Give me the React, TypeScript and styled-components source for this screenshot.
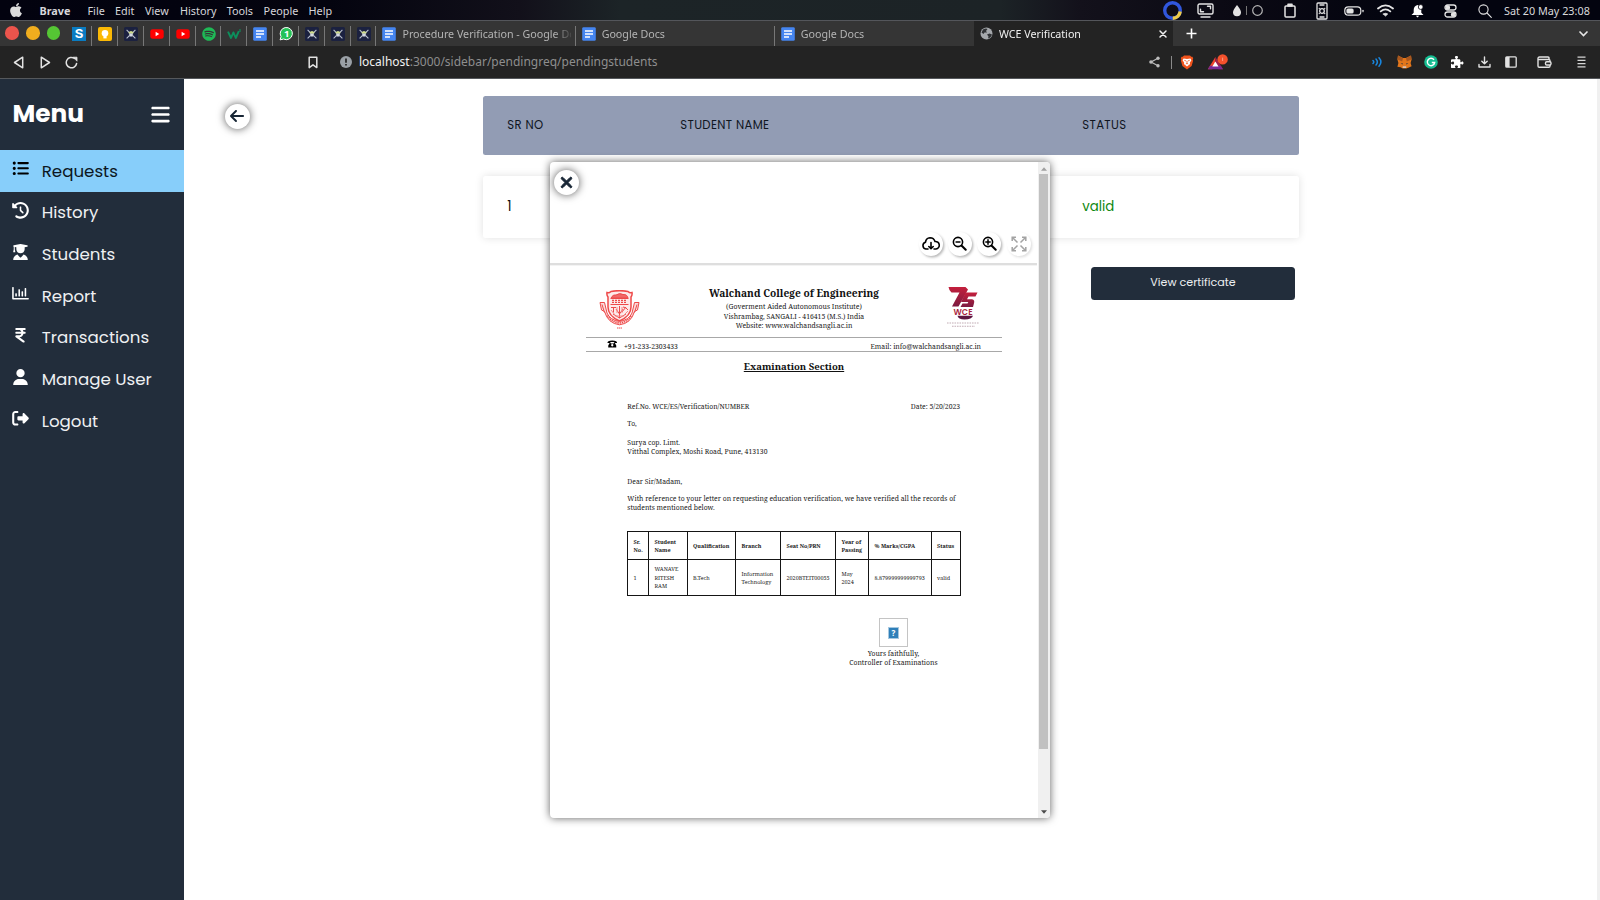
import React from 'react';
import styled, { createGlobalStyle } from 'styled-components';
import {
  FaApple, FaSpotify, FaListUl, FaClockRotateLeft, FaUserGraduate, FaIndianRupeeSign, FaUser,
  FaRightFromBracket, FaArrowLeft, FaXmark, FaBars, FaPuzzlePiece,
} from 'react-icons/fa6';
import { FaRegChartBar } from 'react-icons/fa';

const ui = '"Noto Sans", "Open Sans", sans-serif';
const poppins = 'Poppins, Inter, "Noto Sans", sans-serif';
const serif = '"Noto Serif", "DejaVu Serif Condensed", serif';
const navy = '#222d3b';

const Global = createGlobalStyle`
  * { box-sizing: border-box; }
  html, body { margin: 0; padding: 0; }
  body { width: 1600px; height: 900px; overflow: hidden; background: #fff; }
  svg { display: block; flex: none; }
`;

const Screen = styled.div`
  position: relative;
  display: flex;
  flex-direction: column;
  width: 1600px;
  height: 900px;
  overflow: hidden;
`;

/* ---------- desktop menu bar ---------- */
const MenuBar = styled.header`
  display: flex;
  align-items: center;
  justify-content: space-between;
  height: 20px;
  padding: 1.5px 9px 0 8px;
  background: linear-gradient(90deg, #02020f 0, #04040f 330px, #12101a 520px, #1c2427 620px, #1c2326 1000px, #13111b 1080px, #0a0913 1240px, #03040f 1400px);
  color: #d6d6da;
  font: 10.83px/18px ${ui};
`;
const MenuGroup = styled.nav`
  display: flex;
  align-items: center;
  white-space: nowrap;
`;
const MenuName = styled.span<{ $w: number; $bold?: boolean }>`
  width: ${p => p.$w}px;
  font-weight: ${p => (p.$bold ? 700 : 400)};
`;
const AppleSlot = styled.span`
  width: 31.5px;
  color: #dcdcdc;
  margin-top: -1px;
`;
const StatusGroup = styled.div`
  display: flex;
  align-items: center;
  color: #e4e4e4;
  height: 18px;
`;
const StatusIcon = styled.span<{ $w: number }>`
  display: flex;
  justify-content: center;
  width: ${p => p.$w}px;
`;
const Clock = styled.time`
  width: 87px;
  white-space: nowrap;
  color: #d9d9dc;
`;

/* ---------- browser chrome ---------- */
const TabStrip = styled.div`
  display: flex;
  height: 26px;
  border-top: 1px solid #54565b;
  background: #353535;
  font: 10.7px/16px ${ui};
`;
const Lights = styled.div`
  display: flex;
  align-items: center;
  gap: 7.2px;
  width: 66.5px;
  padding: 0 0 0.5px 5px;
`;
const Light = styled.i<{ $c: string }>`
  width: 13.7px;
  height: 13.7px;
  border-radius: 50%;
  background: ${p => p.$c};
`;
const PinnedTab = styled.div`
  display: flex;
  justify-content: center;
  align-items: center;
  width: 25.84px;
  background: linear-gradient(#777, #777) right bottom / 1px 20px no-repeat;
`;
const Tab = styled.div<{ $active?: boolean; $line?: boolean }>`
  display: flex;
  align-items: center;
  width: 199.2px;
  padding: 0 5px 0 6px;
  color: ${p => (p.$active ? '#f1f1f1' : '#b4b4b4')};
  background: ${p => (p.$active ? '#232323' : p.$line ? 'linear-gradient(#777, #777) right bottom / 1px 20px no-repeat' : 'none')};
`;
const TabTitle = styled.span`
  flex: 1;
  margin-left: 6px;
  overflow: hidden;
  white-space: nowrap;
  mask-image: linear-gradient(90deg, #000 152px, transparent 172px);
`;
const NewTab = styled.div`
  display: flex;
  align-items: center;
  flex: 1;
  justify-content: space-between;
  padding: 0 11px 0 13px;
`;
const Toolbar = styled.div`
  display: flex;
  align-items: center;
  height: 33px;
  border-bottom: 1px solid #55585c;
  background: #232323;
  color: #e2e2e2;
`;
const ToolSlot = styled.span<{ $w: number; $gap?: number }>`
  display: flex;
  justify-content: center;
  width: ${p => p.$w}px;
  margin-left: ${p => p.$gap || 0}px;
`;
const Url = styled.span`
  width: 782.5px;
  margin-left: 6.5px;
  color: #8e8e8e;
  font: 12px/18px ${ui};
  b { font-weight: 400; color: #f2f2f2; }
`;

/* ---------- page ---------- */
const Page = styled.div`
  display: flex;
  height: 821px;
  background: #fff;
`;
const Sidebar = styled.aside`
  width: 184px;
  background: ${navy};
  color: #f1f3f5;
  font-family: ${poppins};
`;
const SideHead = styled.div`
  display: flex;
  align-items: center;
  justify-content: space-between;
  height: 71.2px;
  padding: 0 12.7px 1px 12.5px;
  color: #fff;
  font-size: 24.8px;
  font-weight: 700;
  line-height: 68px;
`;
const SideItem = styled.a<{ $active?: boolean }>`
  display: flex;
  align-items: center;
  height: 41.67px;
  padding: 0.6px 0 0 12px;
  font-size: 16.67px;
  line-height: 25px;
  color: ${p => (p.$active ? '#0c1722' : '#eef0f2')};
  background: ${p => (p.$active ? '#87cefa' : 'transparent')};
  svg { width: 17px; height: 16.67px; margin: -5.5px 12.7px 0 0; color: ${p => (p.$active ? '#000' : '#fff')}; }
`;
const Main = styled.main`
  display: flex;
  flex: 1;
  align-items: flex-start;
  padding: 17px 0 0 40.8px;
`;
const RoundButton = styled.button`
  display: flex;
  align-items: center;
  justify-content: center;
  width: 25.4px;
  height: 25.4px;
  padding: 0;
  border: 0;
  border-radius: 50%;
  background: #fff;
  color: #182635;
  box-shadow: 0 0 8px rgba(0, 0, 0, 0.65);
`;
const BackSlot = styled.div`
  width: 258px;
  padding-top: 7.8px;
`;
const Requests = styled.section`
  display: flex;
  flex-direction: column;
  width: 816.2px;
  font-family: ${poppins};
`;
const columns = '173px 402px 1fr';
const TableHead = styled.div`
  display: grid;
  grid-template-columns: ${columns};
  align-items: center;
  height: 58.8px;
  padding: 0.6px 25px 0 24.5px;
  border-radius: 2.5px;
  background: #929cb4;
  color: #10161f;
  font-size: 11.67px;
  letter-spacing: 0.35px;
`;
const TableRow = styled.div`
  display: grid;
  grid-template-columns: ${columns};
  align-items: center;
  height: 62px;
  margin-top: 21.2px;
  padding: 1px 25px 0 24.5px;
  border-radius: 2.5px;
  box-shadow: 0 0 8px rgba(0, 0, 0, 0.12);
  color: #111;
  font-size: 13.33px;
`;
const Valid = styled.span`
  grid-column: 3;
  color: #0f880f;
`;
const CertButton = styled.button`
  align-self: flex-end;
  width: 204px;
  height: 33px;
  margin: 28.8px 4px 0 0;
  padding: 0 0 1.2px;
  border: 0;
  border-radius: 3.5px;
  background: ${navy};
  color: #eceef0;
  font: 11.11px/17px ${poppins};
`;
const PageScroll = styled.div`
  width: 3.5px;
  background: #f0f0f0;
`;

/* ---------- certificate dialog ---------- */
const Dialog = styled.div`
  position: absolute;
  left: 550px;
  top: 162px;
  display: flex;
  width: 500px;
  height: 656px;
  border-radius: 4px;
  background: #fff;
  box-shadow: 0 0 9px rgba(0, 0, 0, 0.62);
`;
const DialogBody = styled.div`
  width: 487.5px;
`;
const DialogHead = styled.div`
  display: flex;
  flex-direction: column;
  justify-content: space-between;
  height: 101px;
  padding: 7.7px 7px 7.3px 3.9px;
`;
const Divider = styled.div`
  height: 3px;
  margin-right: 1px;
  background: #dedede;
  border-bottom: 1px solid #f3f3f3;
`;
const Tools = styled.div`
  display: flex;
  justify-content: flex-end;
  gap: 5.3px;
`;
const Tool = styled.span<{ $off?: boolean }>`
  display: flex;
  align-items: center;
  justify-content: center;
  width: 24px;
  height: 24px;
  border-radius: 50%;
  color: ${p => (p.$off ? '#a3a3a3' : '#000')};
  box-shadow: 1.4px 1.4px 2.5px rgba(0, 0, 0, ${p => (p.$off ? 0.12 : 0.28)});
`;
const ScrollTrack = styled.div`
  display: flex;
  flex-direction: column;
  align-items: center;
  justify-content: space-between;
  width: 12.5px;
  padding: 4.5px 1.5px 4.5px 1px;
  border-radius: 0 4px 4px 0;
  background: #f0f0f0;
`;
const ScrollThumb = styled.div`
  width: 9.4px;
  height: 575px;
  margin: 0 0 57px;
  background: #c1c1c1;
`;

/* ---------- certificate sheet ---------- */
const Sheet = styled.article`
  width: 416px;
  margin-left: 36px;
  color: #1a1a1a;
  font: 6.83px/9.15px ${serif};
`;
const Letterhead = styled.div`
  display: grid;
  grid-template-columns: 96px 1fr 96px;
  height: 71.5px;
  border-bottom: 1px solid #a8a8a8;
`;
const Emblem = styled.div<{ $pad: string }>`
  padding: ${p => p.$pad};
`;
const College = styled.div`
  display: flex;
  flex-direction: column;
  align-items: center;
  padding-top: 21.3px;
  white-space: nowrap;
`;
const CollegeName = styled.strong`
  margin-bottom: 1.3px;
  font-size: 10.2px;
  line-height: 13px;
  color: #111;
`;
const CollegeLine = styled.span<{ $size?: number; $gap?: number }>`
  font-size: ${p => p.$size || 6.83}px;
  margin-bottom: ${p => p.$gap || 0}px;
`;
const Contact = styled.div`
  display: flex;
  align-items: center;
  height: 14px;
  padding: 4.2px 21px 0 21px;
  border-bottom: 1px solid #a8a8a8;
  svg { margin: -3.5px 6.5px 0 0; }
`;
const Mail = styled.span`
  margin-left: auto;
`;
const SectionTitle = styled.h2`
  margin: 8.8px 0 29px;
  text-align: center;
  font-size: 9.56px;
  font-weight: 700;
  line-height: 13px;
  text-decoration: underline;
  text-decoration-thickness: 1px;
  text-underline-offset: 1px;
  color: #111;
`;
const Letter = styled.div`
  width: 332.8px;
  margin-left: 41.3px;
`;
const Reference = styled.div`
  display: flex;
  justify-content: space-between;
`;
const Para = styled.p<{ $top: number }>`
  margin: ${p => p.$top}px 0 0;
  white-space: pre-line;
`;
const Records = styled.table`
  width: 333px;
  margin: 19.4px 0 0 -0.3px;
  border-collapse: collapse;
  table-layout: fixed;
  font-size: 5.47px;
  line-height: 8.35px;
  th, td {
    padding: 0 0 0 5.5px;
    border: 1px solid #151515;
    text-align: left;
    white-space: pre;
  }
  tr { height: 36px; }
  tr:first-child { height: 28px; }
`;
const Signature = styled.div`
  display: flex;
  flex-direction: column;
  align-items: center;
  width: 88px;
  margin: 22px 22.7px 0 auto;
  white-space: nowrap;
`;
const MissingImage = styled.div`
  display: flex;
  align-items: center;
  justify-content: center;
  width: 28.4px;
  height: 28.5px;
  margin-bottom: 2.3px;
  border: 1px solid #c4c4c4;
`;

const stroke = { fill: 'none', stroke: 'currentColor', strokeLinecap: 'round', strokeLinejoin: 'round' } as const;

const Docs = () => (
  <svg width="14" height="14" viewBox="0 0 14 14">
    <rect x="0.2" y="0.2" width="13.6" height="13.6" rx="1.4" fill="#4585f0" />
    <path d="M3 4h8M3 7h8M3 10h5" stroke="#fff" strokeWidth="1.5" fill="none" />
  </svg>
);
const Drone = () => (
  <svg width="14" height="14" viewBox="0 0 14 14">
    <rect width="14" height="14" rx="1.6" fill="#1b2140" />
    <path d="M2.6 2.8 5.6 5.8M11.4 2.8 8.4 5.8M2.6 11.4 5.6 8.4M11.4 11.4 8.4 8.4" stroke="#b9c0cf" strokeWidth="1.1" />
    <path d="M4.4 5.6Q7 2.2 9.6 5.6L9 6.8H5z" fill="#cfdc8c" />
    <path d="M5 6.6h4l-.6 2.8H5.6z" fill="#d3d8e3" />
  </svg>
);
const YouTube = () => (
  <svg width="14" height="14" viewBox="0 0 14 14">
    <rect x="0.3" y="2.2" width="13.4" height="9.6" rx="2.4" fill="#f00" />
    <path d="M5.6 4.8v4.4L9.3 7z" fill="#fff" />
  </svg>
);
const SBlock = () => (
  <svg width="14" height="14" viewBox="0 0 14 14">
    <rect width="14" height="14" fill="#0a7cc2" />
    <text x="7" y="11.2" textAnchor="middle" fontFamily="Inter, sans-serif" fontWeight="700" fontSize="11.5" textLength="8.6" lengthAdjust="spacingAndGlyphs" fill="#fff">S</text>
  </svg>
);
const Keep = () => (
  <svg width="14" height="14" viewBox="0 0 14 14">
    <rect width="14" height="14" rx="2" fill="#fbb905" />
    <circle cx="7" cy="6.2" r="3.3" fill="#fff" />
    <path d="M5.4 8h3.200v3.400H5.400z" fill="#fff" />
  </svg>
);
const Zigzag = () => (
  <svg width="15" height="12" viewBox="0 0 15 12" fill="none" stroke="#0c8f5c" strokeWidth="1.9" strokeLinejoin="round">
    <path d="M1 3.6 4 10 6.4 4.4 8.8 10 11.8 3.2" />
    <path d="M13 1v3" strokeWidth="1.1" />
  </svg>
);
const Chat = () => (
  <svg width="15" height="15" viewBox="0 0 15 15">
    <path d="M1.1 13.9 2 10.6A6.1 6.1 0 1 1 4.5 13z" fill="#25c257" stroke="#fff" strokeWidth="1" />
    <text x="7.7" y="11" textAnchor="middle" fontFamily="Noto Sans, sans-serif" fontWeight="700" fontSize="9.500" fill="#fff">1</text>
  </svg>
);
const Brave = () => (
  <svg width="14" height="15" viewBox="0 0 14 15">
    <path d="M4 .6h6l1.2 1.2 1.2-.1.8 1.6-.5 1.2.4 1.2-1.5 5.400L7 14.600 2.400 11.100.9 5.700l.4-1.200L.8 3.300l.8-1.600 1.200.1z" fill="#f0531c" />
    <path d="M3.6 3.4 7 4l3.4-.6 1 1.8-1.6 2.6.3 1.2L7 11.6 3.9 9l.3-1.2L2.6 5.2z" fill="#fff" />
    <path d="M4.3 5.3 6.2 6M9.7 5.3 7.8 6M7 6v2.4M5.8 9 7 8.4 8.2 9" stroke="#f0531c" strokeWidth=".8" fill="none" />
  </svg>
);
const Rewards = () => (
  <svg width="22" height="17" viewBox="0 0 22 17">
    <path d="M8.4 3 .8 15.2h4.4L8.4 9.6z" fill="#f0452c" />
    <path d="M8.4 3v6.6l3 5.6H16z" fill="#a5204c" />
    <path d="M.8 15.2 3 11.8h10.8l2.2 3.4z" fill="#7a2a94" />
    <path d="M8.4 7.4 5.3 12.6h6.2z" fill="#fff" />
    <circle cx="15.6" cy="5.4" r="5.2" fill="#f4512c" />
    <path d="M15.6 3.6v3.4" stroke="#f9a18a" strokeWidth=".9" />
  </svg>
);
const Fox = () => (
  <svg width="15" height="14" viewBox="0 0 15 14">
    <path d="M1 .5 6 3h3l5-2.500.6 4-1 3.500 1 3.200-3.200 1.500L9.200 13.500H5.800L3.600 12.200.4 11.700 1.400 8 .4 4.500z" fill="#e2761b" />
    <path d="M1 .5 6 3 5.200 6.400.6 4.500zM14 .5 9 3l.8 3.400L14.400 4.500z" fill="#a8571f" />
    <path d="M3.600 8.600 5.800 8.200 5.600 9.600zM11.400 8.600 9.200 8.200l.2 1.400z" fill="#233447" />
    <path d="M5.800 11.200h3.400l.2 1.900H5.600z" fill="#d7c1b3" />
  </svg>
);

const Phone = () => (
  <svg width="10.5" height="8" viewBox="0 0 21 16">
    <path d="M1 6Q0 1 10.500 1T20 6h-5.500V4.200h-8V6z" fill="#000" />
    <path d="M5.500 5.500h2v1.500h6V5.500h2L18.500 11v4H2.500v-4z" fill="#000" />
    <circle cx="10.5" cy="10.5" r="2.3" fill="#fff" />
  </svg>
);

const Shield = () => (
  <svg width="41" height="39" viewBox="0 0 41 39">
    <g fill="none" stroke="#ee4a4a" strokeWidth="1">
      <path d="M8 2.500Q10 3.500 12 1.500 20.500-.2 29 1.500q2 2 4 1Q33.500 5 32 7v10q0 9-11.500 14Q9 26 9 17V7Q7.500 5 8 2.500z" fill="#fdeaea" strokeWidth="1.5" />
      <path d="M11.500 8.500h18M11.500 14.500h18" />
      <path d="M12 8q2-4 5-3 4-2.500 7-.5 4-.5 5 3.500z" fill="#ef6868" />
      <path d="M13 10.300h15M13 12.300h15" strokeDasharray="2 1" strokeWidth="1.3" />
      <path d="M12 17.500h5M14.500 17.500v5M24 17q3 0 5 3M23 22l4-5M20.500 16v12M17 19l3.500 5 3.500-5M14 24l6.500 4 6.500-4" />
      <path d="M12 20l4 5M29 21l-4 4M18 17v6M23 17v6M16 26h9" stroke="#f38a8a" />
      <path d="M1 12.500h4.500L8 23q3 7 12.500 8.500Q30 30 33 23l2.500-10.500H40L38.500 20l-3 1.500Q32 33.500 20.500 34.800 9 33.500 5.500 21.500l-3-1.500z" fill="#fbdcdc" />
      <path d="M3 14.500 5.500 22.500M38 14.500l-2.500 8" />
      <path d="M8.500 25.500q4 6.500 12 7.500 8-1 12-7.500" strokeDasharray="1.2 .9" strokeWidth="1.6" />
      <path d="M18 38h5" strokeDasharray="1.5 .5" />
    </g>
  </svg>
);

const Jubilee = () => (
  <svg width="34" height="43" viewBox="0 0 34 43">
    <defs>
      <linearGradient id="wine" x1="0" y1="0" x2="0" y2="1">
        <stop offset="0" stopColor="#c41f3c" />
        <stop offset="1" stopColor="#7c1a40" />
      </linearGradient>
    </defs>
    <path d="M2.500 1H19.500L22 3.500 12.500 20.500H6L13.500 6.500H5.500Q3 4.500 2.500 1z" fill="url(#wine)" />
    <path d="M19.500 6.500H31.500L29.500 10.500H22.500l-1.500 2.800H26q3 .6 2 4L27 21H14.500l2-3.500h5l.8-1.500H15z" fill="url(#wine)" />
    <text x="17" y="28.6" textAnchor="middle" fontFamily="Poppins, sans-serif" fontWeight="600" fontSize="8.8" textLength="19" lengthAdjust="spacingAndGlyphs" fill="#a81f40">WCE</text>
    <path d="M11.500 29.700H27Q26 33.300 18.500 33.500 12 33.300 11.500 29.700z" fill="#5c1540" />
    <path d="M1 37h32M6 40.300h23" stroke="#c3adb6" strokeWidth="1.1" strokeDasharray="1.6 .9" />
  </svg>
);

const MissingGlyph = () => (
  <svg width="11" height="12" viewBox="0 0 11 12">
    <rect x=".5" y=".5" width="10" height="11" fill="#2f7fb9" stroke="#a6c8e0" />
    <text x="5.5" y="9" textAnchor="middle" fontFamily="Noto Sans, sans-serif" fontWeight="700" fontSize="8" fill="#fff">?</text>
  </svg>
);

const pinned = [SBlock, Keep, Drone, YouTube, YouTube, null, Zigzag, Docs, Chat, Drone, Drone, Drone];

const nav = [
  { label: 'Requests', Icon: FaListUl, active: true },
  { label: 'History', Icon: FaClockRotateLeft },
  { label: 'Students', Icon: FaUserGraduate },
  { label: 'Report', Icon: FaRegChartBar },
  { label: 'Transactions', Icon: FaIndianRupeeSign },
  { label: 'Manage User', Icon: FaUser },
  { label: 'Logout', Icon: FaRightFromBracket },
];

const record = [
  { head: 'Sr.\nNo.', cell: '1', w: 21 },
  { head: 'Student\nName', cell: 'WANAVE\nRITESH\nRAM', w: 38.5 },
  { head: 'Qualification', cell: 'B.Tech', w: 48.5 },
  { head: 'Branch', cell: 'Information\nTechnology', w: 45 },
  { head: 'Seat No/PRN', cell: '2020BTEIT00055', w: 55 },
  { head: 'Year of\nPassing', cell: 'May\n2024', w: 33 },
  { head: '% Marks/CGPA', cell: '8.879999999999793', w: 62.5 },
  { head: 'Status', cell: 'valid', w: 29.5 },
];

function SystemBar() {
  return (
    <MenuBar>
      <MenuGroup>
        <AppleSlot><FaApple size={16} /></AppleSlot>
        <MenuName $w={48} $bold>Brave</MenuName>
        <MenuName $w={27.5}>File</MenuName>
        <MenuName $w={30}>Edit</MenuName>
        <MenuName $w={35}>View</MenuName>
        <MenuName $w={46.7}>History</MenuName>
        <MenuName $w={36.9}>Tools</MenuName>
        <MenuName $w={45}>People</MenuName>
        <MenuName $w={30}>Help</MenuName>
      </MenuGroup>
      <StatusGroup>
        <StatusIcon $w={33}>
          <svg width="19" height="19" viewBox="0 0 19 19" fill="none" strokeWidth="3.4">
            <circle cx="9.5" cy="9.5" r="7.8" stroke="#3157dc" />
            <path d="M17.200 10.500A7.800 7.800 0 0 1 9.800 17.300" stroke="#f0cb45" />
          </svg>
        </StatusIcon>
        <StatusIcon $w={33}>
          <svg width="17" height="15" viewBox="0 0 17 15" {...stroke} strokeWidth="1.4">
            <rect x="1" y="1" width="15" height="10" rx="1.5" /><path d="M4 14h9M10.500 3.300h3v2.500M6.500 8.700h-3V6.200" />
          </svg>
        </StatusIcon>
        <StatusIcon $w={51}>
          <svg width="31" height="13" viewBox="0 0 31 13">
            <path d="M5 1Q9 6 9 8.200A4 4 0 0 1 1 8.200Q1 6 5 1z" fill="#e4e4e4" />
            <path d="M14.500 2v9" stroke="#777" /><circle cx="25.5" cy="6.5" r="4.8" fill="none" stroke="#b5b5b5" strokeWidth="1.2" />
          </svg>
        </StatusIcon>
        <StatusIcon $w={33}>
          <svg width="12" height="15" viewBox="0 0 12 15" {...stroke} strokeWidth="1.5">
            <rect x="1" y="3" width="10" height="11" rx="1" /><path d="M4 3V1.200h4V3z" fill="#e4e4e4" />
          </svg>
        </StatusIcon>
        <StatusIcon $w={32}>
          <svg width="12" height="18" viewBox="0 0 12 18" {...stroke} strokeWidth="1.3">
            <rect x="1" y="1" width="10" height="16" rx="1" /><circle cx="6" cy="9" r="2.3" /><path d="M4 3h4M3.300 6.500v0M8.700 6.500v0M3.300 11.500v0M8.700 11.500v0M4 15h4" />
          </svg>
        </StatusIcon>
        <StatusIcon $w={31}>
          <svg width="20" height="10" viewBox="0 0 20 10" {...stroke} strokeWidth="1.2">
            <rect x=".8" y=".8" width="16" height="8.4" rx="3.5" /><rect x="3" y="3" width="6" height="4" rx="1" fill="#e4e4e4" /><path d="M19 4.300v1.400" />
          </svg>
        </StatusIcon>
        <StatusIcon $w={32}>
          <svg width="17" height="13" viewBox="0 0 17 13" {...stroke} strokeWidth="1.8">
            <path d="M1 4.500Q8.500-1.800 16 4.500M3.700 7.400Q8.500 3.300 13.300 7.400" /><path d="M6.300 10 8.500 12 10.700 10Q8.500 8.500 6.300 10z" fill="#e4e4e4" strokeWidth=".8" />
          </svg>
        </StatusIcon>
        <StatusIcon $w={33}>
          <svg width="13" height="14" viewBox="0 0 13 14">
            <path d="M6.500 1Q10.300 2 10.300 6v2.800L12.500 11H.5L2.700 8.800V6Q2.700 2 6.500 1z" fill="#fff" /><path d="M4.800 11.800h3.400L6.500 13.500z" fill="#fff" /><circle cx="9.7" cy="3" r="2.4" fill="#fff" stroke="#06060f" strokeWidth=".8" />
          </svg>
        </StatusIcon>
        <StatusIcon $w={32}>
          <svg width="13" height="14" viewBox="0 0 13 14" {...stroke} strokeWidth="1.3">
            <rect x="1" y="1" width="11" height="5" rx="2.5" /><rect x="1" y="8" width="11" height="5" rx="2.5" /><circle cx="3.8" cy="3.5" r="1.7" fill="#e4e4e4" /><circle cx="9.2" cy="10.5" r="1.7" fill="#e4e4e4" />
          </svg>
        </StatusIcon>
        <StatusIcon $w={38}>
          <svg width="14" height="14" viewBox="0 0 14 14" {...stroke} strokeWidth="1.1">
            <circle cx="5.5" cy="5.5" r="4.6" /><path d="m9 9 4.300 4.300" />
          </svg>
        </StatusIcon>
        <Clock>Sat 20 May 23:08</Clock>
      </StatusGroup>
    </MenuBar>
  );
}

function BrowserChrome() {
  return (
    <>
      <TabStrip>
        <Lights><Light $c="#ec544c" /><Light $c="#f0ad1e" /><Light $c="#55c634" /></Lights>
        {pinned.map((Icon, i) => (
          <PinnedTab key={i}>{Icon ? <Icon /> : <FaSpotify size={14} color="#1fb956" />}</PinnedTab>
        ))}
        <Tab $line><Docs /><TabTitle>Procedure Verification - Google Docs</TabTitle></Tab>
        <Tab $line><Docs /><TabTitle>Google Docs</TabTitle></Tab>
        <Tab><Docs /><TabTitle>Google Docs</TabTitle></Tab>
        <Tab $active>
          <svg width="13" height="13" viewBox="0 0 13 13">
            <circle cx="6.5" cy="6.5" r="6" fill="#a5a8ac" />
            <path d="M3 2.500Q6 1 7.500 2L6 4 7 5.500H4.500L3.500 7 1.500 5.500zM7 7.500 9.500 6.500 12 7.500Q11 11 8 11.500L8.500 9.500z" fill="#303235" />
          </svg>
          <TabTitle>WCE Verification</TabTitle>
          <svg width="10" height="10" viewBox="0 0 10 10" {...stroke} strokeWidth="1.5"><path d="m2 2 6 6M8 2 2 8" /></svg>
        </Tab>
        <NewTab>
          <svg width="11" height="11" viewBox="0 0 11 11" fill="none" stroke="#fff" strokeWidth="1.6"><path d="M5.500.5v10M.5 5.500h10" /></svg>
          <svg width="11" height="7" viewBox="0 0 11 7" fill="none" stroke="#e6e6e6" strokeWidth="1.6"><path d="m1.500 1.500 4 4 4-4" /></svg>
        </NewTab>
      </TabStrip>
      <Toolbar>
        <ToolSlot $w={27} $gap={5}>
          <svg width="11" height="13" viewBox="0 0 11 13" {...stroke} strokeWidth="1.5"><path d="M9.700 1.200v10.600L1.500 6.500z" /></svg>
        </ToolSlot>
        <ToolSlot $w={26}>
          <svg width="11" height="13" viewBox="0 0 11 13" {...stroke} strokeWidth="1.5"><path d="M1.300 1.200v10.600L9.500 6.500z" /></svg>
        </ToolSlot>
        <ToolSlot $w={27}>
          <svg width="13" height="13" viewBox="0 0 13 13" {...stroke} strokeWidth="1.5"><path d="M11.600 7.500A5.200 5.200 0 1 1 9.500 2.400" /><path d="M8.500 1.200H12v3.600z" fill="#e2e2e2" strokeWidth=".8" /></svg>
        </ToolSlot>
        <ToolSlot $w={16} $gap={219.5}>
          <svg width="10" height="13" viewBox="0 0 10 13" {...stroke} strokeWidth="1.5"><path d="M1.200 1.200h7.600v10.400L5 8.800l-3.800 2.800z" /></svg>
        </ToolSlot>
        <ToolSlot $w={14} $gap={18}>
          <svg width="12" height="12" viewBox="0 0 12 12"><circle cx="6" cy="6" r="6" fill="#9aa0a6" /><path d="M6 2.500v4.200M6 8v1.600" stroke="#232323" strokeWidth="1.7" /></svg>
        </ToolSlot>
        <Url><b>localhost</b>:3000/sidebar/pendingreq/pendingstudents</Url>
        <ToolSlot $w={26}>
          <svg width="11" height="12" viewBox="0 0 11 12"><path d="M9 2.200 2 6l7 3.800" fill="none" stroke="#bdbdbd" strokeWidth="1.2" /><g fill="#bdbdbd"><circle cx="9" cy="2.2" r="1.7" /><circle cx="2" cy="6" r="1.8" /><circle cx="9" cy="9.8" r="1.7" /></g></svg>
        </ToolSlot>
        <ToolSlot $w={7}><svg width="1" height="13"><rect width="1" height="13" fill="#8a8a8a" /></svg></ToolSlot>
        <ToolSlot $w={25}><Brave /></ToolSlot>
        <ToolSlot $w={37}><Rewards /></ToolSlot>
        <ToolSlot $w={26} $gap={128}>
          <svg width="12" height="12" viewBox="0 0 12 12" fill="none" stroke="#1887e0" strokeWidth="1.5" strokeLinecap="round"><path d="M1 4.500q1.500 1.500 0 3M4 3q2.700 3 0 6M7 1.800q3.800 4.200 0 8.400" /></svg>
        </ToolSlot>
        <ToolSlot $w={27}><Fox /></ToolSlot>
        <ToolSlot $w={27}>
          <svg width="14" height="14" viewBox="0 0 14 14"><circle cx="7" cy="7" r="6.8" fill="#15bd91" /><path d="M10 4.800A3.700 3.700 0 1 0 10.700 7.500H7.800M10.700 7.500 9.600 9.800" fill="none" stroke="#fff" strokeWidth="1.4" /></svg>
        </ToolSlot>
        <ToolSlot $w={26}><FaPuzzlePiece size={12.5} color="#fff" /></ToolSlot>
        <ToolSlot $w={27}>
          <svg width="13" height="12" viewBox="0 0 13 12" {...stroke} strokeWidth="1.4"><path d="M6.500 1v6.500M3.800 5.200l2.700 2.600 2.700-2.600M1 8.500V11h11V8.500" /></svg>
        </ToolSlot>
        <ToolSlot $w={27}>
          <svg width="12" height="12" viewBox="0 0 12 12"><rect x=".8" y=".8" width="10.4" height="10.4" rx="1" fill="none" stroke="#e2e2e2" strokeWidth="1.3" /><rect x="1" y="1" width="3.6" height="10" fill="#e2e2e2" /></svg>
        </ToolSlot>
        <ToolSlot $w={39}>
          <svg width="15" height="12" viewBox="0 0 15 12" {...stroke} strokeWidth="1.4"><path d="M12 3.500V2.200Q12 1 11 1H2.500Q1 1 1 2.500V10q0 1.200 1.200 1.200h9.600Q13 11.200 13 10V4.700q0-1.200-1.200-1.200H2.200" /><rect x="8.5" y="5.8" width="5.5" height="3.2" rx="1.2" fill="#232323" /></svg>
        </ToolSlot>
        <ToolSlot $w={35}>
          <svg width="9" height="12" viewBox="0 0 9 12" fill="none" stroke="#d6d6d6" strokeWidth="1.2"><path d="M.5 1.200h8M.5 4.400h8M.5 7.600h8M.5 10.800h8" /></svg>
        </ToolSlot>
      </Toolbar>
    </>
  );
}

function Certificate() {
  return (
    <Sheet>
      <Letterhead>
        <Emblem $pad="23.5px 0 0 13px"><Shield /></Emblem>
        <College>
          <CollegeName>Walchand College of Engineering</CollegeName>
          <CollegeLine $size={6.9} $gap={0.8}>(Goverment Aided Autonomous Institute)</CollegeLine>
          <CollegeLine>Vishrambag, SANGALI - 416415 (M.S.) India</CollegeLine>
          <CollegeLine>Website: www.walchandsangli.ac.in</CollegeLine>
        </College>
        <Emblem $pad="20px 0 0 40px"><Jubilee /></Emblem>
      </Letterhead>
      <Contact>
        <Phone />
        <span>+91-233-2303433</span>
        <Mail>Email: info@walchandsangli.ac.in</Mail>
      </Contact>
      <SectionTitle>Examination Section</SectionTitle>
      <Letter>
        <Reference>
          <span>Ref.No. WCE/ES/Verification/NUMBER</span>
          <span>Date: 5/20/2023</span>
        </Reference>
        <Para $top={7.1}>To,</Para>
        <Para $top={9.9}>{'Surya cop. Limt.\nVitthal Complex, Moshi Road, Pune, 413130'}</Para>
        <Para $top={20.8}>Dear Sir/Madam,</Para>
        <Para $top={7.9}>{'With reference to your letter on requesting education verification, we have verified all the records of\nstudents mentioned below.'}</Para>
        <Records>
          <colgroup>{record.map(c => <col key={c.head} width={c.w} />)}</colgroup>
          <tbody>
            <tr>{record.map(c => <th key={c.head}>{c.head}</th>)}</tr>
            <tr>{record.map(c => <td key={c.head}>{c.cell}</td>)}</tr>
          </tbody>
        </Records>
        <Signature>
          <MissingImage><MissingGlyph /></MissingImage>
          <span>Yours faithfully,</span>
          <span>Controller of Examinations</span>
        </Signature>
      </Letter>
    </Sheet>
  );
}

function CertificateDialog() {
  return (
    <Dialog role="dialog">
      <DialogBody>
        <DialogHead>
          <RoundButton aria-label="Close"><FaXmark size={17} strokeWidth={30} stroke="currentColor" /></RoundButton>
          <Tools>
            <Tool>
              <svg width="20" height="16" viewBox="0 0 20 16" {...stroke} strokeWidth="1.6">
                <path d="M7 13H4.800A3.500 3.500 0 0 1 4.500 6.200Q5 2 9 1.800 12.800 1.800 14 5.500A3.700 3.700 0 0 1 15 13h-2" /><path d="M10 6.500v6M7.800 10.500l2.200 2.200 2.200-2.200" />
              </svg>
            </Tool>
            <Tool>
              <svg width="15" height="15" viewBox="0 0 15 15" {...stroke} strokeWidth="1.6">
                <circle cx="6" cy="6" r="4.6" /><path d="m9.700 9.700 4 4" strokeWidth="2" /><path d="M4 6h4" strokeWidth="1.4" />
              </svg>
            </Tool>
            <Tool>
              <svg width="15" height="15" viewBox="0 0 15 15" {...stroke} strokeWidth="1.6">
                <circle cx="6" cy="6" r="4.6" /><path d="m9.700 9.700 4 4" strokeWidth="2" /><path d="M3.800 6h4.400M6 3.800v4.400" strokeWidth="1.5" />
              </svg>
            </Tool>
            <Tool $off>
              <svg width="16" height="16" viewBox="0 0 16 16" fill="none" stroke="currentColor" strokeWidth="1.5">
                <path d="M1.200 5V1.200H5M11 1.200h3.800V5M1.200 11v3.800H5M11 14.800h3.800V11M1.500 1.500l5 5M14.500 1.500l-5 5M1.500 14.500l5-5M14.500 14.500l-5-5" />
              </svg>
            </Tool>
          </Tools>
        </DialogHead>
        <Divider />
        <Certificate />
      </DialogBody>
      <ScrollTrack>
        <svg width="6" height="4" viewBox="0 0 6 4"><path d="M3 .3 6 3.700H0z" fill="#a0a0a0" /></svg>
        <ScrollThumb />
        <svg width="6" height="4" viewBox="0 0 6 4"><path d="M3 3.700 6 .3H0z" fill="#4a4a4a" /></svg>
      </ScrollTrack>
    </Dialog>
  );
}

export default function App() {
  return (
    <Screen>
      <Global />
      <SystemBar />
      <BrowserChrome />
      <Page>
        <Sidebar>
          <SideHead>Menu<FaBars size={21} /></SideHead>
          {nav.map(({ label, Icon, active }) => (
            <SideItem key={label} $active={active}><Icon />{label}</SideItem>
          ))}
        </Sidebar>
        <Main>
          <BackSlot><RoundButton aria-label="Back"><FaArrowLeft size={16} /></RoundButton></BackSlot>
          <Requests>
            <TableHead><span>SR NO</span><span>STUDENT NAME</span><span>STATUS</span></TableHead>
            <TableRow><span>1</span><Valid>valid</Valid></TableRow>
            <CertButton>View certificate</CertButton>
          </Requests>
        </Main>
        <PageScroll />
      </Page>
      <CertificateDialog />
    </Screen>
  );
}
